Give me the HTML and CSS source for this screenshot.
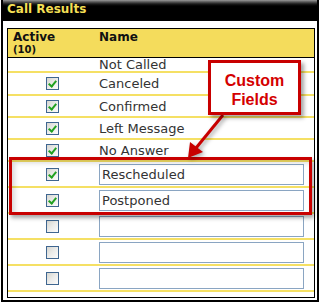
FILE: index.html
```html
<!DOCTYPE html>
<html>
<head>
<meta charset="utf-8">
<link rel="stylesheet" href="styles.css">
</head>
<body>
<div class="frame">
  <div class="titlebar">Call Results</div>
  <div class="content">
    <div class="table">
      <div class="row head">
        <div class="c1">Active<span class="count">(10)</span></div>
        <div class="c2">Name</div>
      </div>
      <div class="row first"><div class="c1"></div><div class="c2 name">Not Called</div></div>
      <div class="row text tall"><div class="c1"><span class="cb on"></span></div><div class="c2 name">Canceled</div></div>
      <div class="row text"><div class="c1"><span class="cb on"></span></div><div class="c2 name">Confirmed</div></div>
      <div class="row text"><div class="c1"><span class="cb on"></span></div><div class="c2 name">Left Message</div></div>
      <div class="row text"><div class="c1"><span class="cb on"></span></div><div class="c2 name">No Answer</div></div>
      <div class="row field"><div class="c1"><span class="cb on"></span></div><div class="c2"><div class="input">Rescheduled</div></div></div>
      <div class="row field"><div class="c1"><span class="cb on"></span></div><div class="c2"><div class="input">Postponed</div></div></div>
      <div class="row field"><div class="c1"><span class="cb"></span></div><div class="c2"><div class="input"></div></div></div>
      <div class="row field"><div class="c1"><span class="cb"></span></div><div class="c2"><div class="input"></div></div></div>
      <div class="row field"><div class="c1"><span class="cb"></span></div><div class="c2"><div class="input"></div></div></div>
    </div>
  </div>
</div>
<div class="highlight"></div>
<svg class="arrow" width="322" height="302" viewBox="0 0 322 302">
  <line x1="223" y1="115" x2="196" y2="148" stroke="#c80000" stroke-width="3"/>
  <polygon points="188,158 190,142 203,152" fill="#c80000"/>
</svg>
<div class="callout">Custom<br>Fields</div>
</body>
</html>
```

FILE: styles.css
```css
html, body {
  margin: 0;
  padding: 0;
  background: #fff;
}
body {
  position: relative;
  width: 322px;
  height: 302px;
  overflow: hidden;
  font-family: "DejaVu Sans", Verdana, sans-serif;
}
.frame {
  margin-left: 1px;
  width: 318px;
  height: 302px;
  box-sizing: border-box;
  border: 2px solid #000;
  border-top: 0;
  background: #fff;
}
.titlebar {
  height: 21px;
  box-sizing: border-box;
  padding: 2px 0 0 4px;
  background: linear-gradient(#9a9a9a 0, #555 2px, #1a1a1a 4px, #000 6px, #000 100%);
  color: #f3df55;
  font-weight: bold;
  font-size: 12px;
  line-height: 14px;
}
.content {
  padding: 7px 2px 0 4px;
}
.table {
  border: 1px solid #000;
  height: 270px;
  box-sizing: border-box;
}
.row {
  display: grid;
  grid-template-columns: 88px 1fr;
  border-bottom: 2px solid #f5e064;
  box-sizing: border-box;
  color: #333;
  font-size: 13px;
}
.row .c1 {
  display: flex;
  align-items: center;
  justify-content: center;
}
.row .c2 {
  display: flex;
  align-items: center;
}
.head {
  height: 29px;
  background: #f4dc5c;
  border-bottom: 1px solid #000;
  color: #111;
  font-weight: bold;
  font-size: 12px;
  align-items: start;
}
.head .c1 {
  display: block;
  padding: 2px 0 0 5px;
  line-height: 12px;
}
.head .c2 {
  display: block;
  padding: 2px 0 0 3px;
  line-height: 12px;
}
.count {
  display: block;
  font-size: 10px;
  line-height: 13px;
}
.name {
  padding-left: 3px;
}
.first {
  height: 15px;
  line-height: 13px;
}
.text {
  height: 22px;
}
.tall {
  height: 23px;
}
.field {
  height: 26px;
}
.input {
  margin-left: 3px;
  width: 205px;
  height: 21px;
  box-sizing: border-box;
  border: 1px solid #8aa5c2;
  background: #fff;
  padding-left: 2px;
  line-height: 19px;
  color: #333;
  font-size: 13px;
}
.cb {
  width: 13px;
  height: 13px;
  box-sizing: border-box;
  border: 1px solid #3f6690;
  background: linear-gradient(135deg, #d6d6d0 0%, #ececea 50%, #fbfbfb 100%);
  position: relative;
}
.cb.on::after {
  content: "";
  position: absolute;
  left: 3px;
  top: 1px;
  width: 3px;
  height: 6px;
  border: solid #21a121;
  border-width: 0 2px 2px 0;
  transform: rotate(40deg);
}
.highlight {
  position: absolute;
  left: 9px;
  top: 157px;
  width: 303px;
  height: 58px;
  box-sizing: border-box;
  border: 3px solid #c80000;
  box-shadow: 2px 3px 4px rgba(0, 0, 0, 0.35), inset 3px 3px 5px rgba(0, 0, 0, 0.15);
}
.arrow {
  position: absolute;
  left: 0;
  top: 0;
  filter: drop-shadow(2px 2px 2px rgba(0, 0, 0, 0.35));
}
.callout {
  position: absolute;
  left: 208px;
  top: 60px;
  width: 93px;
  height: 55px;
  box-sizing: border-box;
  border: 3px solid #c80000;
  background: #fff;
  box-shadow: 3px 3px 4px rgba(0, 0, 0, 0.35);
  padding-top: 8px;
  text-align: center;
  color: #d40000;
  font-family: "Liberation Sans", Arial, sans-serif;
  font-weight: bold;
  font-size: 16px;
  line-height: 19px;
}
```
